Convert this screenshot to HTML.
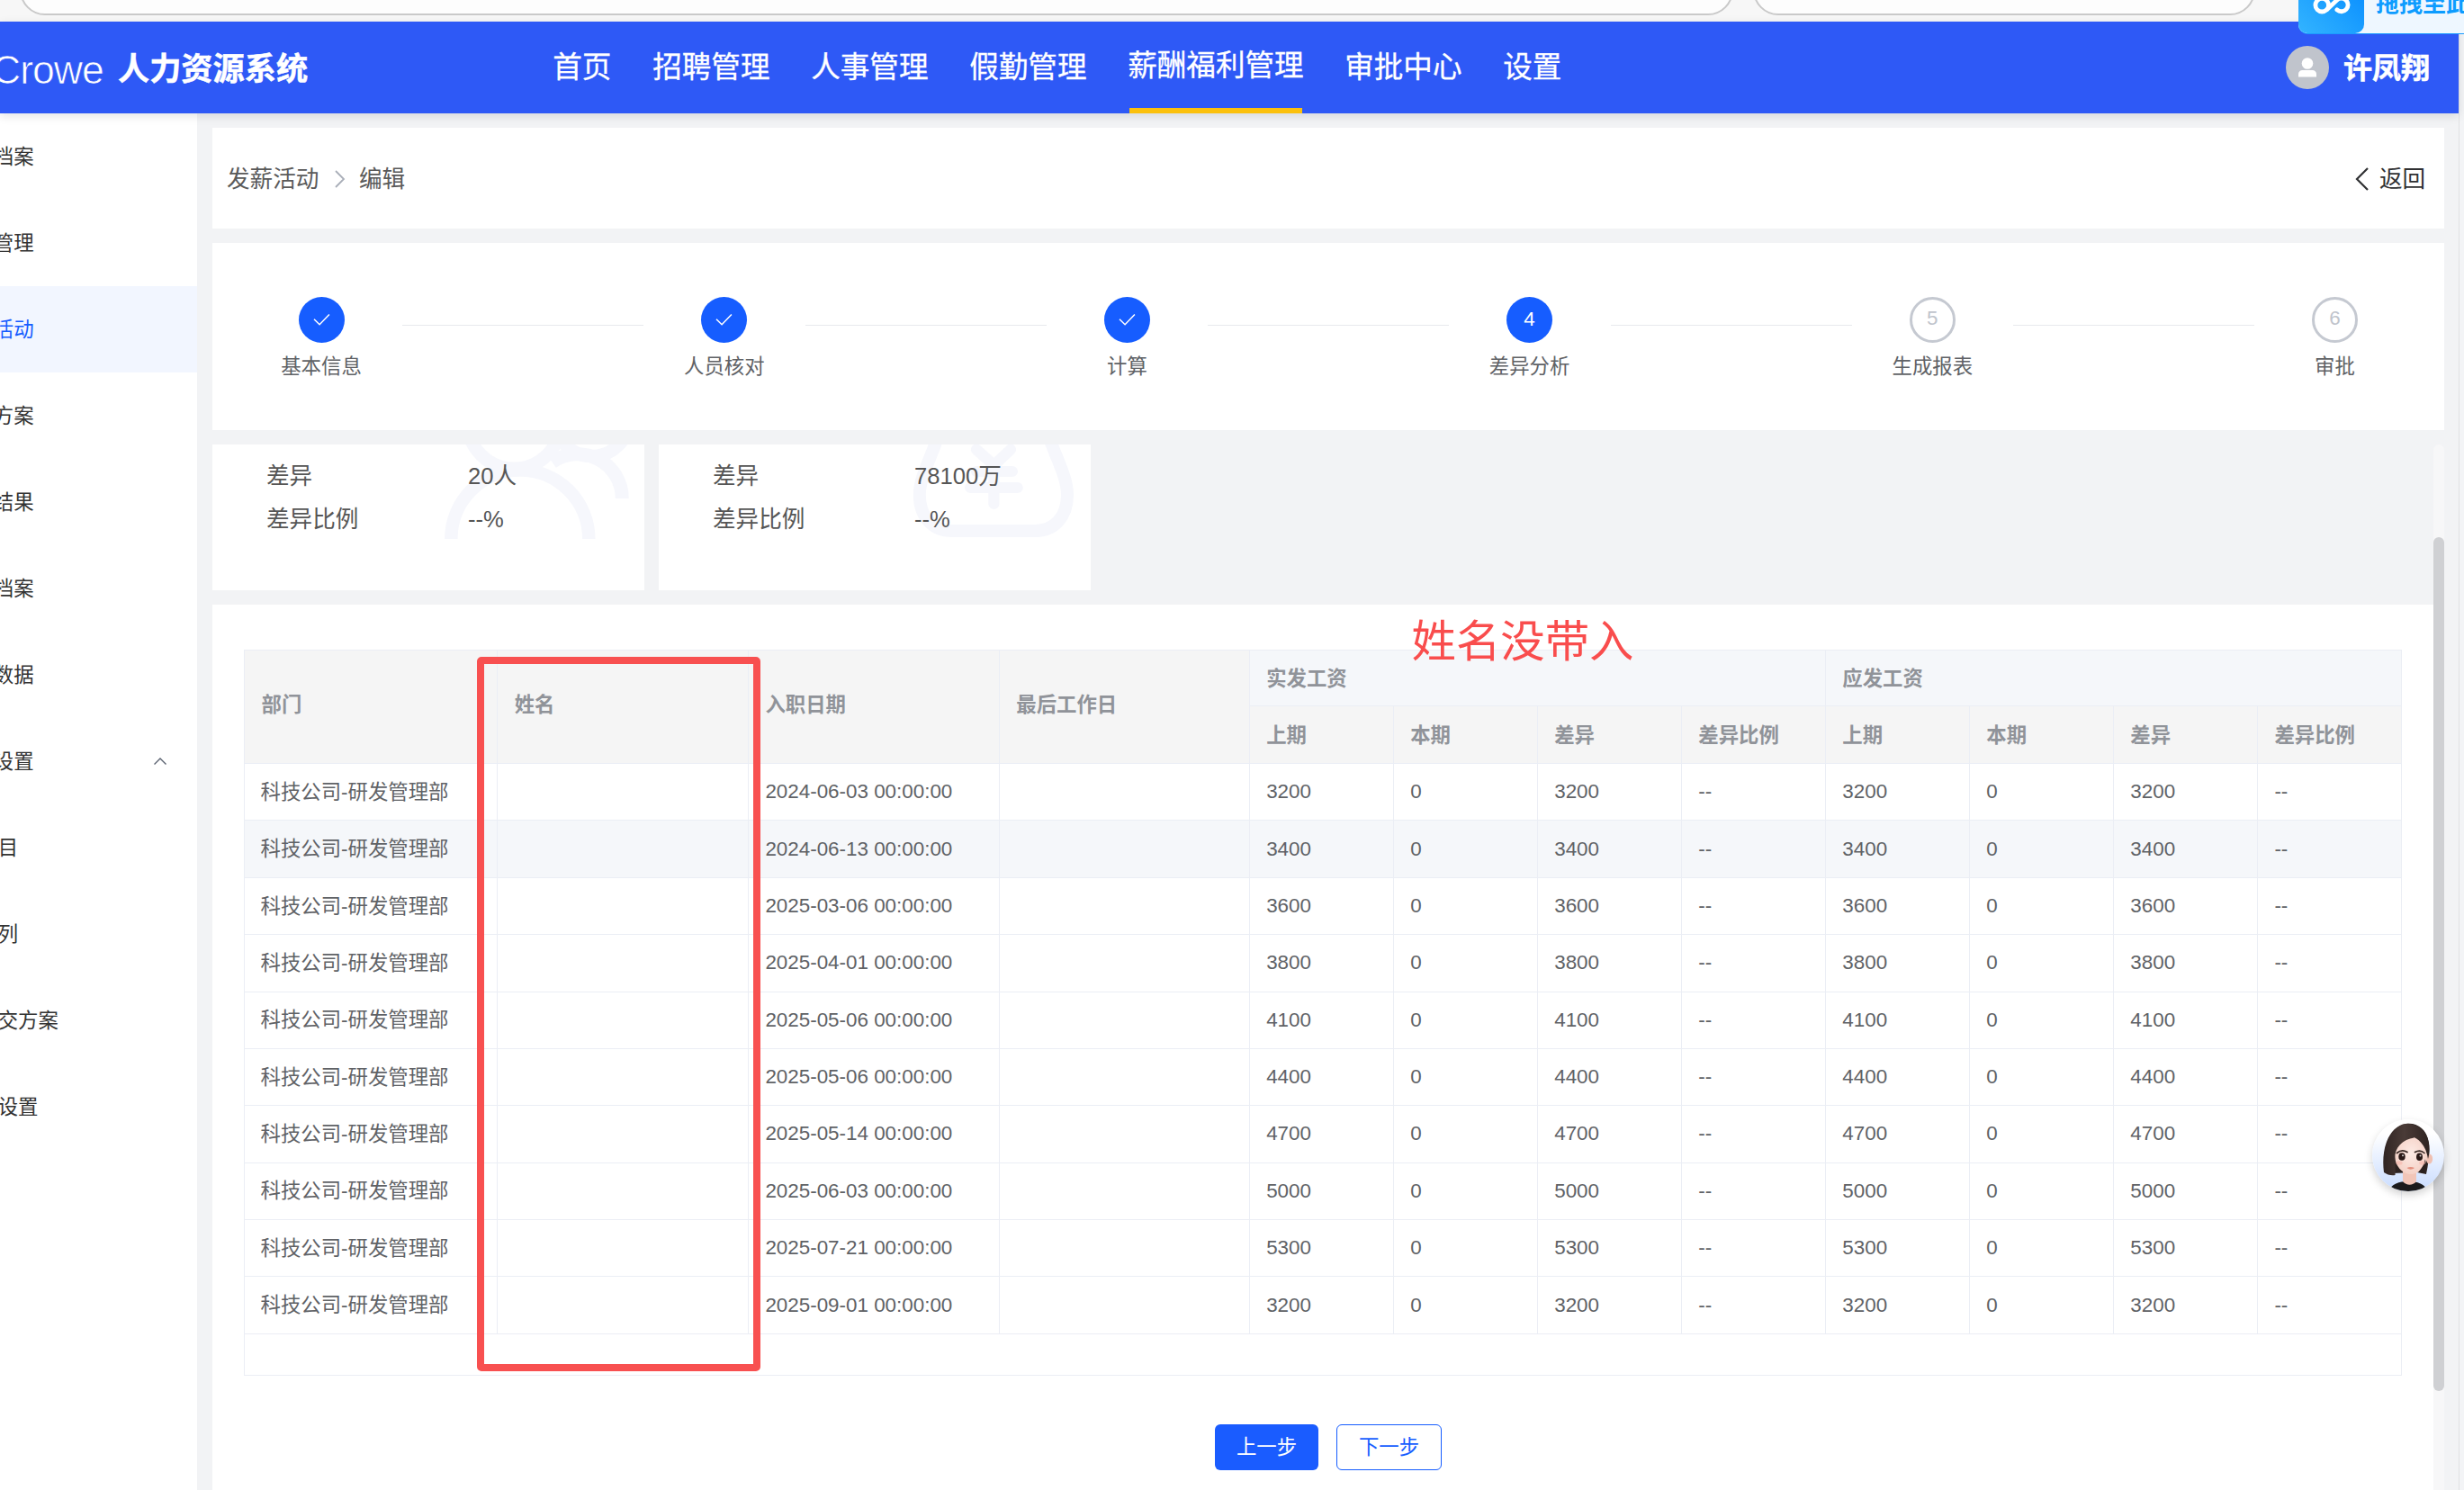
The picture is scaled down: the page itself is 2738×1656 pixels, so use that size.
<!DOCTYPE html>
<html lang="zh-CN"><head><meta charset="utf-8"><title>人力资源系统</title>
<style>
*{box-sizing:border-box;margin:0;padding:0}
html,body{width:2738px;height:1656px;overflow:hidden;background:#f2f3f5;
 font-family:"Liberation Sans","Noto Sans CJK SC",sans-serif;color:#4e5969}
.abs{position:absolute}
#chrome{left:0;top:0;width:2738px;height:24px;background:#f7f7f7;overflow:hidden}
.urlbox{position:absolute;top:-40px;height:56.5px;border:2px solid #c9c9c9;border-radius:28px;background:#fdfdfd}
#header{left:0;top:24px;width:2732px;height:102px;background:#2e59f6;box-shadow:0 3px 10px rgba(0,21,41,.12);overflow:hidden;z-index:5}
#logo{left:-9.500px;top:26.700px;font-size:45px;line-height:54px;color:#fff;transform-origin:0 50%;transform:scaleX(.99);letter-spacing:-1px;-webkit-text-stroke:.7px #2e59f6}
#sysname{left:131px;top:28.5px;font-size:35.2px;line-height:48px;font-weight:bold;color:#fff;white-space:nowrap;-webkit-text-stroke:.5px #fff}
.nav{position:absolute;top:0;height:102px;line-height:101px;font-size:32.600px;color:#fff;white-space:nowrap;-webkit-text-stroke:.3px #fff;margin-left:-.800px}
.nav.act{line-height:98px}
.nav.act:after{content:"";position:absolute;left:1.800px;right:1.800px;bottom:0;height:5.8px;background:#fbc00d}
#avatar{left:2540px;top:27px;width:48px;height:48px;border-radius:50%;background:#c0c4cc}
#uname{left:2604px;top:28px;font-size:32px;line-height:48px;font-weight:bold;color:#fff;white-space:nowrap;-webkit-text-stroke:.5px #fff}
#rightedge{left:2732px;top:24px;width:6px;height:1632px;background:#f3f4f6;border-left:1px solid #e1e2e4}
#widget{left:2554px;top:-12px;width:200px;height:49px;background:#eef7ff;border-radius:10px 0 0 10px;z-index:9;box-shadow:0 1px 0 #1b9bff}
#wicon{left:0;top:0;width:73px;height:49px;border-radius:10px;background:linear-gradient(45deg,#33b4ff,#0a8fff)}
#wtext{left:86px;top:-3.400px;font-size:26px;line-height:38px;font-weight:bold;color:#0d9cff;white-space:nowrap}
#side{left:0;top:126px;width:219px;height:1530px;background:#fff;overflow:hidden}
.mi{position:absolute;left:0;width:219px;height:96px;line-height:96px;font-size:22.4px;color:#333;white-space:nowrap}
.mi span{position:absolute;left:-52px;top:1px}
.mi.sub span{left:-69.500px}
.mi.on{background:#f2f6ff;color:#165dff}
.card{position:absolute;background:#fff}
#bc{left:236px;top:142px;width:2480px;height:112px}
#bc .t{position:absolute;top:37px;font-size:25.6px;line-height:40px;white-space:nowrap;color:#5a5a5a}
#steps{left:236px;top:270px;width:2480px;height:207.500px}
.st{position:absolute;top:60px;width:300px;margin-left:-150px;text-align:center}
.st .c{width:51px;height:51px;border-radius:50%;margin:0 auto;background:#165dff;color:#fff;font-size:22.4px;line-height:49px;position:relative}
.st .c.w{background:#fff;border:3px solid #c5c9d1;color:#c0c4cc;line-height:42px}
.st .l{margin-top:9px;font-size:22.4px;line-height:36px;color:#606266}
.ln{position:absolute;top:90.800px;height:1.300px;width:268px;background:#e8e9ee}
.sum{position:absolute;top:494px;height:162px;width:480px;background:#fff;overflow:hidden}
.sum .k,.sum .v{position:absolute;font-size:25.6px;line-height:40px;color:#565656;white-space:nowrap;margin-top:.800px}
#tcard{left:236px;top:672px;width:2468px;height:990px}
#sbtrack{left:2704px;top:494px;width:12px;height:1162px;background:#f7f7f8;border-radius:6px 6px 0 0}
#sbthumb{left:2704px;top:597px;width:12px;height:949px;background:#cfd0d3;border-radius:6px}
table{position:absolute;left:271px;top:722px;width:2398px;border-collapse:separate;border-spacing:0;table-layout:fixed;
 border-top:1.5px solid #ebeef5;border-left:1.5px solid #ebeef5;font-size:22.4px}
th,td{border-right:1.5px solid #ebeef5;border-bottom:1.5px solid #ebeef5;text-align:left;padding:0 0 0 18.500px;white-space:nowrap;overflow:hidden}
th{color:#909399;font-weight:bold;background:#f5f5f5;padding-bottom:3.800px}
th.r{padding-bottom:8.500px}
th.g{background:#f5f7fa;height:62px}
tr.h2 th{height:64px}
td{color:#606266;height:63.380px;background:#fff}
td.c{padding-bottom:4.800px;padding-left:17.500px}
tr.hv td{background:#f5f7fa}
#tfoot{left:271px;top:1470px;width:2398px;height:59px;border:1.5px solid #ebeef5;border-top:none;background:#fff}
#redbox{left:530px;top:730px;width:315px;height:794px;border:8px solid #f85050;border-radius:5px;z-index:3}
#redtxt{left:1568.500px;top:676px;font-size:49.400px;line-height:66px;color:#f94d4d;white-space:nowrap;z-index:3;font-family:"Noto Sans CJK SC",sans-serif}
.btn{position:absolute;top:1583px;height:51px;line-height:49.500px;font-size:22.4px;border-radius:6px;text-align:center;white-space:nowrap}
#b1{left:1350px;width:115px;background:#1a5cff;color:#fff;line-height:51.500px}
#b2{left:1485px;width:117px;background:#fff;color:#165dff;border:1.5px solid #165dff}
#bot{left:2636px;top:1244px;width:80px;height:80px;border-radius:50%;z-index:8;box-shadow:0 4px 10px rgba(0,0,0,.18);overflow:hidden;background:linear-gradient(#fff 20%,#c9dcff)}
</style></head><body>
<div id="chrome" class="abs"><div class="urlbox" style="left:22px;width:1904px"></div><div class="urlbox" style="left:1948px;width:558px"></div></div>
<div id="header" class="abs">
<div id="logo" class="abs">Crowe</div><div id="sysname" class="abs">人力资源系统</div>
<div class="nav" style="left:615px">首页</div>
<div class="nav" style="left:726px">招聘管理</div>
<div class="nav" style="left:902px">人事管理</div>
<div class="nav" style="left:1078px">假勤管理</div>
<div class="nav act" style="left:1254px">薪酬福利管理</div>
<div class="nav" style="left:1495px">审批中心</div>
<div class="nav" style="left:1671px">设置</div>
<div id="avatar" class="abs"><svg width="48" height="48" viewBox="0 0 48 48"><circle cx="24" cy="19.5" r="6.3" fill="#fff"/><path d="M14 34.5v-3.2c0-2.4 2-4.3 4.4-4.3h11.2c2.4 0 4.4 1.9 4.4 4.3v3.2z" fill="#fff"/></svg></div>
<div id="uname" class="abs">许凤翔</div>
</div>
<div id="rightedge" class="abs"></div>
<div id="widget" class="abs"><div id="wicon" class="abs"><svg width="73" height="49" viewBox="0 0 73 49"><g fill="none" stroke="#fff" stroke-width="4.800" stroke-linecap="round" stroke-linejoin="round"><circle cx="26.200" cy="17.700" r="7.300"/><path d="M42.900 22.900A7.300 7.300 0 1 0 42.600 12.300L31.600 22.800"/></g></svg></div><div id="wtext" class="abs">拖拽至此</div></div>
<div id="side" class="abs">
<div class="mi" style="top:0px"><span>薪资档案</span></div>
<div class="mi" style="top:96px"><span>调薪管理</span></div>
<div class="mi on" style="top:192px"><span>发薪活动</span></div>
<div class="mi" style="top:288px"><span>薪资方案</span></div>
<div class="mi" style="top:384px"><span>发薪结果</span></div>
<div class="mi" style="top:480px"><span>社保档案</span></div>
<div class="mi" style="top:576px"><span>薪资数据</span></div>
<div class="mi" style="top:672px"><span>薪资设置</span></div>
<div class="mi sub" style="top:768px"><span>薪资项目</span></div>
<div class="mi sub" style="top:864px"><span>薪资序列</span></div>
<div class="mi sub" style="top:960px"><span>社保缴交方案</span></div>
<div class="mi sub" style="top:1056px"><span>个税率设置</span></div>
<svg class="abs" style="left:170px;top:715px" width="16" height="10" viewBox="0 0 16 10"><path d="M1.500 8.500 8 2l6.500 6.500" fill="none" stroke="#5a6270" stroke-width="1.400"/></svg>
</div>
<div id="bc" class="card"><div class="t" style="left:16px">发薪活动</div><svg class="abs" style="left:134px;top:45px" width="14" height="24" viewBox="0 0 14 24"><path d="M3 3l9 9-9 9" fill="none" stroke="#a9aeb8" stroke-width="1.800"/></svg><div class="t" style="left:163px">编辑</div><svg class="abs" style="left:2380px;top:43px" width="18" height="28" viewBox="0 0 18 28"><path d="M15 2 3 14l12 12" fill="none" stroke="#303133" stroke-width="2.200"/></svg><div class="t" style="left:2408px;color:#303133">返回</div></div>
<div id="steps" class="card">
<div class="st" style="left:121px"><div class="c"><svg width="51" height="51" viewBox="0 0 51 51" style="display:block"><path d="M17 24.700L23.100 30.800L33.900 19.500" fill="none" stroke="#fff" stroke-width="1.500"/></svg></div><div class="l">基本信息</div></div>
<div class="ln" style="left:211px"></div>
<div class="st" style="left:568.8px"><div class="c"><svg width="51" height="51" viewBox="0 0 51 51" style="display:block"><path d="M17 24.700L23.100 30.800L33.900 19.500" fill="none" stroke="#fff" stroke-width="1.500"/></svg></div><div class="l">人员核对</div></div>
<div class="ln" style="left:658.8px"></div>
<div class="st" style="left:1016.4000000000001px"><div class="c"><svg width="51" height="51" viewBox="0 0 51 51" style="display:block"><path d="M17 24.700L23.100 30.800L33.900 19.500" fill="none" stroke="#fff" stroke-width="1.500"/></svg></div><div class="l">计算</div></div>
<div class="ln" style="left:1106.4px"></div>
<div class="st" style="left:1463.6px"><div class="c">4</div><div class="l">差异分析</div></div>
<div class="ln" style="left:1553.6px"></div>
<div class="st" style="left:1911.3000000000002px"><div class="c w">5</div><div class="l">生成报表</div></div>
<div class="ln" style="left:2001.3000000000002px"></div>
<div class="st" style="left:2358.4px"><div class="c w">6</div><div class="l">审批</div></div>
</div>
<div class="sum" style="left:236px"><svg class="abs" style="left:0;top:0" width="480" height="162" viewBox="0 0 480 162"><g fill="none" stroke="#f6f7fc" stroke-width="14.500"><path d="M265.300 105A76.500 76.500 0 0 1 418.300 105"/><circle cx="335.300" cy="-25.200" r="52"/><path d="M377.600 19.600A49.400 49.400 0 0 1 455.300 60.100" stroke-width="15"/><circle cx="421.800" cy="-28.200" r="41.250"/></g></svg><div class="k" style="left:60px;top:14px">差异</div><div class="v" style="left:284px;top:14px">20人</div><div class="k" style="left:60px;top:62px">差异比例</div><div class="v" style="left:284px;top:62px">--%</div></div>
<div class="sum" style="left:732px"><svg class="abs" style="left:0;top:0" width="480" height="162" viewBox="0 0 480 162"><g fill="none" stroke="#f6f7fc" stroke-linecap="round" stroke-linejoin="round"><path stroke-width="14" d="M309 -5C300 20 289.800 38 289.800 56C289.800 80 304 96 326 96L418 96C440 96 454 80 454 56C454 38 444 20 434.800 -5"/><path stroke-width="12.200" d="M353 5.600L372.400 23.100L391 5.600M372.400 23.100V65.900M353 30H392.900M346.100 48H398.700"/></g></svg><div class="k" style="left:60px;top:14px">差异</div><div class="v" style="left:284px;top:14px">78100万</div><div class="k" style="left:60px;top:62px">差异比例</div><div class="v" style="left:284px;top:62px">--%</div></div>
<div id="tcard" class="card"></div>
<div id="sbtrack" class="abs"></div><div id="sbthumb" class="abs"></div>
<div id="tfoot" class="abs"></div>
<table><colgroup><col style="width:281.200px"><col style="width:278.600px"><col style="width:278.900px"><col style="width:277.800px"><col style="width:160px"><col style="width:160px"><col style="width:160px"><col style="width:160px"><col style="width:160px"><col style="width:160px"><col style="width:160px"><col style="width:160px"></colgroup>
<thead><tr><th class="r" rowspan="2">部门</th><th class="r" rowspan="2">姓名</th><th class="r" rowspan="2">入职日期</th><th class="r" rowspan="2">最后工作日</th><th class="g" colspan="4">实发工资</th><th class="g" colspan="4">应发工资</th></tr>
<tr class="h2"><th>上期</th><th>本期</th><th>差异</th><th>差异比例</th><th>上期</th><th>本期</th><th>差异</th><th>差异比例</th></tr></thead><tbody>
<tr><td class="c">科技公司-研发管理部</td><td></td><td>2024-06-03 00:00:00</td><td></td><td>3200</td><td>0</td><td>3200</td><td>--</td><td>3200</td><td>0</td><td>3200</td><td>--</td></tr>
<tr class="hv"><td class="c">科技公司-研发管理部</td><td></td><td>2024-06-13 00:00:00</td><td></td><td>3400</td><td>0</td><td>3400</td><td>--</td><td>3400</td><td>0</td><td>3400</td><td>--</td></tr>
<tr><td class="c">科技公司-研发管理部</td><td></td><td>2025-03-06 00:00:00</td><td></td><td>3600</td><td>0</td><td>3600</td><td>--</td><td>3600</td><td>0</td><td>3600</td><td>--</td></tr>
<tr><td class="c">科技公司-研发管理部</td><td></td><td>2025-04-01 00:00:00</td><td></td><td>3800</td><td>0</td><td>3800</td><td>--</td><td>3800</td><td>0</td><td>3800</td><td>--</td></tr>
<tr><td class="c">科技公司-研发管理部</td><td></td><td>2025-05-06 00:00:00</td><td></td><td>4100</td><td>0</td><td>4100</td><td>--</td><td>4100</td><td>0</td><td>4100</td><td>--</td></tr>
<tr><td class="c">科技公司-研发管理部</td><td></td><td>2025-05-06 00:00:00</td><td></td><td>4400</td><td>0</td><td>4400</td><td>--</td><td>4400</td><td>0</td><td>4400</td><td>--</td></tr>
<tr><td class="c">科技公司-研发管理部</td><td></td><td>2025-05-14 00:00:00</td><td></td><td>4700</td><td>0</td><td>4700</td><td>--</td><td>4700</td><td>0</td><td>4700</td><td>--</td></tr>
<tr><td class="c">科技公司-研发管理部</td><td></td><td>2025-06-03 00:00:00</td><td></td><td>5000</td><td>0</td><td>5000</td><td>--</td><td>5000</td><td>0</td><td>5000</td><td>--</td></tr>
<tr><td class="c">科技公司-研发管理部</td><td></td><td>2025-07-21 00:00:00</td><td></td><td>5300</td><td>0</td><td>5300</td><td>--</td><td>5300</td><td>0</td><td>5300</td><td>--</td></tr>
<tr><td class="c">科技公司-研发管理部</td><td></td><td>2025-09-01 00:00:00</td><td></td><td>3200</td><td>0</td><td>3200</td><td>--</td><td>3200</td><td>0</td><td>3200</td><td>--</td></tr>
</tbody></table>
<div id="redbox" class="abs"></div><div id="redtxt" class="abs">姓名没带入</div>
<div id="b1" class="btn">上一步</div><div id="b2" class="btn">下一步</div>
<div id="bot" class="abs"><svg width="80" height="80" viewBox="0 0 80 80"><defs><linearGradient id="hg" x1="0" y1="0" x2="1" y2="0"><stop offset="0" stop-color="#2f2422"/><stop offset=".45" stop-color="#4a3b37"/><stop offset="1" stop-color="#2e2321"/></linearGradient><radialGradient id="fg" cx=".5" cy=".45" r=".6"><stop offset="0" stop-color="#fdebe5"/><stop offset="1" stop-color="#f4cfc4"/></radialGradient></defs><path d="M14 59C11 36 17 12 34 6c12-4 26 2 29 20 1 8 0 22-3 35l-10-2-28 1z" fill="#2d2321"/><path d="M18 80c3-8 12-11 22-11s19 3 22 11z" fill="#1b1b1d"/><path d="M34 56h15v13c-4 5-11 5-15 0z" fill="#f1c5b8"/><ellipse cx="63.500" cy="44" rx="3.600" ry="5.500" fill="#efc0b2"/><path d="M25 40c0-13 8-21 18-21s18 8 18 21c0 11-8 21-18 21S25 51 25 40z" fill="url(#fg)"/><path d="M46.500 20.500C36 22 27 29 25.500 39 25 47 26 55 25.500 62c-4 1-9-.5-12.500-3C10 36 16 12 34 5.500c5-1.500 10-1 14 1.500 9 2 15 11 15.500 26 0 4-.5 8-1.500 11-1.500-11-7-20-15.500-24z" fill="url(#hg)"/><path d="M59 44c1 5 0 11-1.500 16l-6-1.500c4-4.500 6.500-9 7.500-14.500z" fill="#2a201e"/><ellipse cx="33" cy="41.500" rx="3.700" ry="4.300" fill="#2a1917"/><ellipse cx="52.500" cy="41.800" rx="3.500" ry="4.300" fill="#2a1917"/><circle cx="34" cy="40.300" r="1" fill="#fff" opacity=".8"/><circle cx="53.500" cy="40.600" r="1" fill="#fff" opacity=".8"/><path d="M27.500 37.500c3.500-3 8-3.200 11.500-1M47.500 36.500c3.500-2 7.500-1.800 10.500 1" stroke="#3a2a26" stroke-width="1.700" fill="none" stroke-linecap="round"/><path d="M38.500 54c2.800-1.300 5.700-1.300 8.500 0-2.800 2.300-5.700 2.300-8.500 0z" fill="#e3907f"/><ellipse cx="30" cy="48.500" rx="3.600" ry="2.200" fill="#f7b5ac" opacity=".6"/><ellipse cx="55.500" cy="48.500" rx="3.400" ry="2.200" fill="#f7b5ac" opacity=".6"/></svg></div>
</body></html>
